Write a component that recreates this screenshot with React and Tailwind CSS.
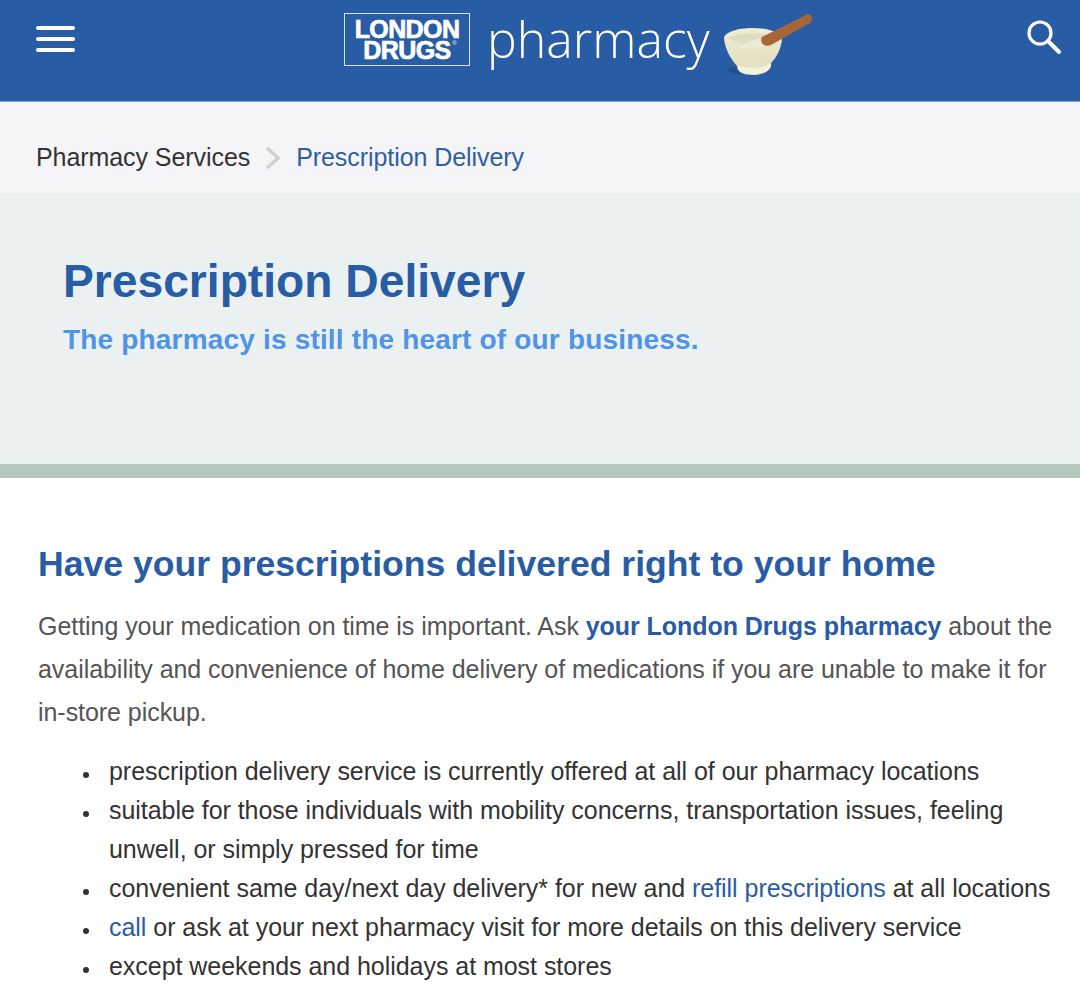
const Logo = () => (
  <div className="mt-[1px] flex h-[53px] w-[126px] flex-col items-center justify-center border-[1.5px] border-[#d5e4f2] font-['Liberation_Sans',sans-serif] text-[25px] leading-[21px] font-bold tracking-[-0.6px] text-white [-webkit-text-stroke:0.7px_white]">
    <span>LONDON</span>
    <span className="relative">
      DRUGS
      <span className="absolute top-[-2px] right-[-6px] text-[6px] leading-[10px] font-normal tracking-normal [-webkit-text-stroke:0px]">®</span>
    </span>
  </div>
)

const Mortar = () => (
  <svg width="90" height="66" viewBox="0 0 90 66" className="ml-[14px]">
    <defs>
      <linearGradient id="bowl" x1="0" y1="0" x2="0" y2="1">
        <stop offset="0" stopColor="#eeecd2" />
        <stop offset="1" stopColor="#e0ddbc" />
      </linearGradient>
    </defs>
    <ellipse cx="24" cy="58" rx="20" ry="5" fill="#20508f" />
    <path d="M0 26 C1 20 14 16 28 16 C44 16 57 20 58 27 C57 38 52 46 47 51 C48 58 40 63 29 63 C19 63 13 60 13 54 C6 46 1 37 0 26 Z" fill="url(#bowl)" />
    <path d="M5 26 C14 20 42 19 52 27 C42 34 16 35 5 26 Z" fill="#dedcc2" />
    <path d="M14 36 C20 31 30 28 38 26 L42 33 C32 36 22 37 14 36 Z" fill="#ecebd6" />
    <path d="M14 53 C22 57 38 57 47 51 C48 58 40 62 29 62 C19 62 13 59 14 53 Z" fill="#f5f2dc" />
    <path d="M38 25 L80 4 C83 1 88 2 88 6 C89 9 86 11 84 12 L47 33 C40 36 35 30 38 25 Z" fill="#a8653a" />
  </svg>
)

const SearchIcon = () => (
  <svg width="36" height="38" viewBox="0 0 36 38" className="mt-[6px] ml-auto text-white">
    <circle cx="13" cy="15" r="11" fill="none" stroke="currentColor" strokeWidth="3.2" />
    <path d="M21 23 L32 34" fill="none" stroke="currentColor" strokeWidth="4" strokeLinecap="round" />
  </svg>
)

const Bullet = ({ children }) => (
  <li className="pl-[8px]">{children}</li>
)

const App = () => {
  return (
    <div className="h-[993px] overflow-hidden bg-white font-['Liberation_Sans',sans-serif]">
      <header className="flex h-[102px] items-start border-b border-[#6ea3d6] bg-[#285ca5] pt-[12px] pr-[17px] pl-[36px]">
        <div className="mt-[14px] flex w-[39px] flex-col gap-[7px]">
          <span className="h-[4px] rounded-sm bg-white" />
          <span className="h-[4px] rounded-sm bg-white" />
          <span className="h-[4px] rounded-sm bg-white" />
        </div>
        <div className="ml-[269px] flex items-start">
          <Logo />
          <span className="mt-[-3px] ml-[17px] font-['Open_Sans',sans-serif] text-[50px] leading-[60px] font-light text-white">pharmacy</span>
          <Mortar />
        </div>
        <SearchIcon />
      </header>
      <nav className="flex h-[91px] items-center bg-[#f5f5f7] pt-[20px] pl-[36px] text-[25px] tracking-[-0.07px]">
        <span className="text-[#333333]">Pharmacy Services</span>
        <svg width="18" height="26" viewBox="0 0 18 26" className="mr-[14px] ml-[14px]">
          <path d="M3 3 L14 13 L3 23" fill="none" stroke="#cfcfcf" strokeWidth="3.5" />
        </svg>
        <span className="text-[#2f5f9f]">Prescription Delivery</span>
      </nav>
      <section className="h-[285px] border-b-[14px] border-[#b4c8bd] bg-[#ebf1f0] pt-[59px] pl-[63px]">
        <h1 className="text-[46.2px] leading-[58px] font-bold text-[#285ca5]">Prescription Delivery</h1>
        <p className="mt-[12px] text-[28px] leading-[36px] font-bold tracking-[0.18px] text-[#4f94e8]">The pharmacy is still the heart of our business.</p>
      </section>
      <main className="pt-[61px] pr-[20px] pl-[38px]">
        <h2 className="text-[35.6px] leading-[50px] font-bold text-[#285ca5]">Have your prescriptions delivered right to your home</h2>
        <p className="mt-[16px] text-[25px] leading-[43px] tracking-[-0.05px] text-[#555555]">
          Getting your medication on time is important. Ask <a className="font-bold text-[#285ca5]">your London Drugs pharmacy</a> about the availability and convenience of home delivery of medications if you are unable to make it for in-store pickup.
        </p>
        <ul className="mt-[18px] list-disc pl-[63px] text-[25px] leading-[39px] tracking-[-0.04px] text-[#333333] marker:text-[19px]">
          <Bullet>prescription delivery service is currently offered at all of our pharmacy locations</Bullet>
          <Bullet>suitable for those individuals with mobility concerns, transportation issues, feeling unwell, or simply pressed for time</Bullet>
          <Bullet>convenient same day/next day delivery* for new and <a className="text-[#285ca5]">refill prescriptions</a> at all locations</Bullet>
          <Bullet><a className="text-[#285ca5]">call</a> or ask at your next pharmacy visit for more details on this delivery service</Bullet>
          <Bullet>except weekends and holidays at most stores</Bullet>
        </ul>
      </main>
    </div>
  )
}

export default App
